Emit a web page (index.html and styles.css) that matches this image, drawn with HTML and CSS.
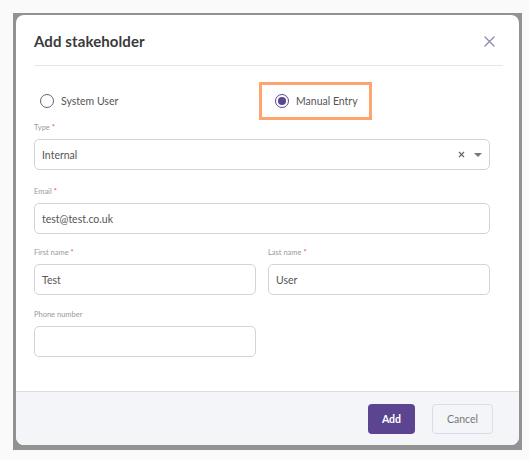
FILE: index.html
```html
<!DOCTYPE html>
<html>
<head>
<meta charset="utf-8">
<link rel="stylesheet" href="styles.css">
</head>
<body>
<div class="backdrop">
  <div class="modal">
    <div class="modal-header">
      <h2 class="title">Add stakeholder</h2>
      <span class="close">
        <svg width="11" height="11" viewBox="0 0 11 11"><path d="M1 1L10 10M10 1L1 10" stroke="#8f8fab" stroke-width="1.4" fill="none" stroke-linecap="round"/></svg>
      </span>
    </div>
    <div class="modal-body">
      <div class="radio-row">
        <label class="radio-option">
          <span class="radio"></span>
          <span class="radio-text">System User</span>
        </label>
        <label class="radio-option selected">
          <span class="radio"><span class="dot"></span></span>
          <span class="radio-text">Manual Entry</span>
          <span class="highlight"></span>
        </label>
      </div>
      <div class="field field-type">
        <div class="label">Type <span class="req">*</span></div>
        <div class="input select">
          <span class="value">Internal</span>
          <span class="select-icons">
            <svg width="7" height="7" viewBox="0 0 7 7"><path d="M1 1L6 6M6 1L1 6" stroke="#666" stroke-width="1.2" fill="none"/></svg>
            <svg class="caret" width="8" height="4" viewBox="0 0 8 4"><path d="M0 0H8L4 4Z" fill="#777"/></svg>
          </span>
        </div>
      </div>
      <div class="field field-email">
        <div class="label">Email <span class="req">*</span></div>
        <div class="input"><span class="value">test@test.co.uk</span></div>
      </div>
      <div class="field-row row-names">
        <div class="field">
          <div class="label">First name <span class="req">*</span></div>
          <div class="input"><span class="value">Test</span></div>
        </div>
        <div class="field">
          <div class="label">Last name <span class="req">*</span></div>
          <div class="input"><span class="value">User</span></div>
        </div>
      </div>
      <div class="field-row">
        <div class="field">
          <div class="label">Phone number</div>
          <div class="input"></div>
        </div>
        <div></div>
      </div>
    </div>
    <div class="modal-footer">
      <button class="btn btn-primary">Add</button>
      <button class="btn btn-secondary">Cancel</button>
    </div>
  </div>
</div>
</body>
</html>
```
FILE: styles.css
```css
* { box-sizing: border-box; }
html, body {
  margin: 0;
  padding: 0;
  background: #fafafa;
  font-family: "Lato", "Open Sans", sans-serif;
}
.backdrop {
  margin: 13px 0 0 13px;
  width: 509px;
  height: 437px;
  background: #929292;
  padding: 2px 3px 4px 3px;
}
.modal {
  background: #fff;
  border-radius: 8px;
  height: 430px;
  display: flex;
  flex-direction: column;
  overflow: hidden;
}
.modal-header {
  margin: 0 16px 0 18px;
  height: 51px;
  border-bottom: 1px solid #e6e6e6;
  display: flex;
  align-items: center;
  justify-content: space-between;
  padding-top: 2px;
}
.title {
  margin: 0;
  font-size: 15px;
  font-weight: 700;
  color: #3a3a3a;
  letter-spacing: 0.1px;
}
.close {
  display: flex;
  margin-right: 8px;
}
.modal-body {
  flex: 1;
  padding: 25px 29px 0 18px;
}
.radio-row {
  display: grid;
  grid-template-columns: 1fr 1fr;
  column-gap: 12px;
  height: 20px;
  margin-bottom: 12px;
}
.radio-option {
  position: relative;
  display: flex;
  align-items: center;
  gap: 7px;
  padding-left: 6px;
  font-size: 10.5px;
  color: #555;
}
.radio-option.selected { padding-left: 7px; }
.radio {
  width: 14px;
  height: 14px;
  border-radius: 50%;
  border: 1px solid #666;
  display: flex;
  align-items: center;
  justify-content: center;
}
.selected .radio { border-color: #5b4590; }
.dot {
  width: 8px;
  height: 8px;
  border-radius: 50%;
  background: #5b4590;
}
.highlight {
  position: absolute;
  left: -9px;
  top: -9px;
  width: 113px;
  height: 38px;
  border: 3px solid #ffa46e;
}
.field { margin-bottom: 16px; }
.field-type { margin-bottom: 17px; }
.field-email { margin-bottom: 14px; }
.row-names .field { margin-bottom: 15px; }
.label {
  font-size: 7.5px;
  line-height: 10px;
  color: #9a9a9a;
  margin-bottom: 6px;
}
.req { color: #e85a5a; }
.input {
  height: 31px;
  border: 1px solid #d3d3dc;
  border-radius: 5px;
  display: flex;
  align-items: center;
  padding: 0 7px;
  font-size: 10.5px;
  color: #555;
}
.select { justify-content: space-between; }
.select-icons {
  display: flex;
  align-items: center;
  gap: 9px;
  margin-right: 0;
}
.caret { margin-top: 1px; }
.field-row {
  display: grid;
  grid-template-columns: 1fr 1fr;
  column-gap: 12px;
}
.modal-footer {
  height: 54px;
  border-top: 1px solid #dcdcdc;
  background: #f4f5f9;
  display: flex;
  align-items: center;
  justify-content: flex-end;
  gap: 17px;
  padding-right: 26px;
}
.btn {
  font-family: "Lato", "Open Sans", sans-serif;
  font-size: 10.5px;
  height: 30px;
  border-radius: 4px;
  cursor: pointer;
}
.btn-primary {
  width: 47px;
  background: #5b4590;
  border: none;
  color: #fff;
  font-weight: 700;
}
.btn-secondary {
  width: 61px;
  background: #f4f5f9;
  border: 1px solid #dcdce2;
  color: #777;
}
```
